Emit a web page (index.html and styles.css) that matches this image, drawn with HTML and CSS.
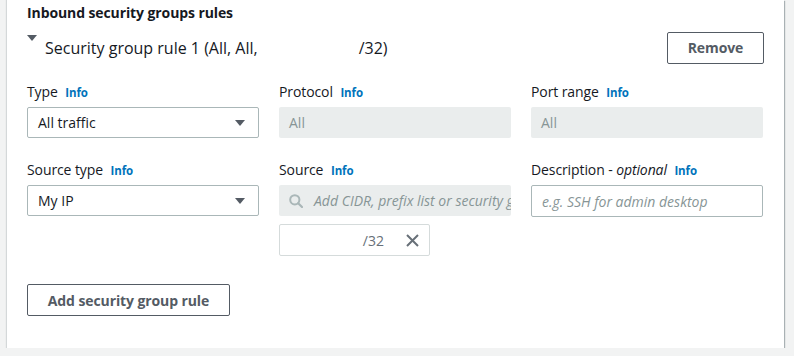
FILE: index.html
```html
<!DOCTYPE html>
<html>
<head>
<meta charset="utf-8">
<link rel="stylesheet" href="styles.css">
</head>
<body>
<div class="card">
  <h2 class="heading">Inbound security groups rules</h2>
  <div class="rule-header">
    <div class="rule-title">
      <span class="caret"></span>
      <span class="title-text">Security group rule 1 (All, All,</span>
      <span class="title-end">/32)</span>
    </div>
    <button class="btn btn-remove">Remove</button>
  </div>
  <div class="grid">
    <div class="field">
      <div class="label">Type <span class="info">Info</span></div>
      <div class="select"><span>All traffic</span><span class="arrow"></span></div>
    </div>
    <div class="field">
      <div class="label">Protocol <span class="info">Info</span></div>
      <div class="disabled">All</div>
    </div>
    <div class="field">
      <div class="label">Port range <span class="info">Info</span></div>
      <div class="disabled">All</div>
    </div>
    <div class="field">
      <div class="label">Source type <span class="info">Info</span></div>
      <div class="select"><span>My IP</span><span class="arrow"></span></div>
    </div>
    <div class="field">
      <div class="label">Source <span class="info">Info</span></div>
      <div class="search">
        <svg class="search-icon" width="14" height="14" viewBox="0 0 14 14"><circle cx="5.8" cy="5.8" r="4.6" fill="none" stroke="#aab7b8" stroke-width="2"/><line x1="9.2" y1="9.2" x2="13" y2="13" stroke="#aab7b8" stroke-width="2.2" stroke-linecap="round"/></svg>
        <span class="placeholder">Add CIDR, prefix list or security group</span>
      </div>
      <div class="chip">
        <span class="chip-text">/32</span>
        <svg class="chip-x" width="13" height="13" viewBox="0 0 13 13"><path d="M1 1L12 12M12 1L1 12" stroke="#687078" stroke-width="2" fill="none"/></svg>
      </div>
    </div>
    <div class="field">
      <div class="label">Description - <i>optional</i> <span class="info">Info</span></div>
      <div class="input"><span class="placeholder">e.g. SSH for admin desktop</span></div>
    </div>
  </div>
  <button class="btn btn-add">Add security group rule</button>
</div>
</body>
</html>
```
FILE: styles.css
```css
html, body {
  margin: 0;
  padding: 0;
  background: #f2f3f3;
  font-family: "Open Sans", "Noto Sans", sans-serif;
  color: #16191f;
}
.card {
  margin-left: 7px;
  width: 777px;
  box-sizing: border-box;
  background: #fff;
  padding: 4px 21px 32px 20px;
  box-shadow: 1px 1px 1px 0 rgba(0,28,36,0.3), -1px 0 1px 0 rgba(0,28,36,0.12);
}
.heading {
  margin: 0;
  font-size: 14px;
  line-height: 18px;
  font-weight: 700;
  letter-spacing: -0.1px;
}
.rule-header {
  margin-top: 10px;
  display: flex;
  justify-content: space-between;
  align-items: center;
  height: 31px;
}
.rule-title {
  display: flex;
  align-items: center;
  font-size: 16px;
  position: relative;
  padding-left: 18px;
  line-height: 22px;
}
.caret {
  position: absolute;
  left: 0;
  top: -2px;
  width: 0;
  height: 0;
  border-left: 5px solid transparent;
  border-right: 5px solid transparent;
  border-top: 6px solid #545b64;
}
.title-end {
  margin-left: 101px;
}
.btn {
  font-family: inherit;
  font-weight: 700;
  font-size: 14px;
  color: #545b64;
  background: #fff;
  border: 1px solid #545b64;
  border-radius: 2px;
  height: 32px;
  padding: 0;
  letter-spacing: -0.1px;
}
.btn-remove {
  width: 97px;
  margin-right: -1px;
}
.grid {
  margin-top: 19px;
  display: grid;
  grid-template-columns: 232px 232px 232px;
  column-gap: 20px;
  row-gap: 22px;
}
.label {
  font-size: 14px;
  line-height: 20px;
  margin-bottom: 4px;
  letter-spacing: -0.1px;
}
.label i {
  font-style: italic;
}
.info {
  color: #0073bb;
  font-weight: 700;
  font-size: 11.5px;
  margin-left: 4px;
}
.select, .disabled, .input, .search {
  box-sizing: border-box;
  height: 31px;
  border-radius: 2px;
  display: flex;
  align-items: center;
  font-size: 14px;
  padding: 0 10px;
}
.select {
  border: 1px solid #aab7b8;
  justify-content: space-between;
  padding-right: 13px;
}
.arrow {
  width: 0;
  height: 0;
  border-left: 5.5px solid transparent;
  border-right: 5.5px solid transparent;
  border-top: 6px solid #545b64;
}
.disabled {
  background: #eaeded;
  color: #879596;
}
.input {
  border: 1px solid #aab7b8;
  height: 32px;
}
.search {
  background: #eaeded;
  overflow: hidden;
  white-space: nowrap;
  padding-left: 10px;
}
.search-icon {
  flex: none;
  margin-right: 11px;
}
.placeholder {
  font-style: italic;
  color: #879596;
  font-size: 14px;
}
.chip {
  margin-top: 8px;
  width: 151px;
  height: 32px;
  box-sizing: border-box;
  border: 1px solid #d5dbdb;
  border-radius: 2px;
  display: flex;
  align-items: center;
  justify-content: flex-end;
  padding-right: 10px;
}
.chip-text {
  color: #687078;
  font-size: 14px;
  margin-right: 22px;
}
.chip-x {
  flex: none;
}
.btn-add {
  margin-top: 28px;
  width: 203px;
  display: block;
}
```
